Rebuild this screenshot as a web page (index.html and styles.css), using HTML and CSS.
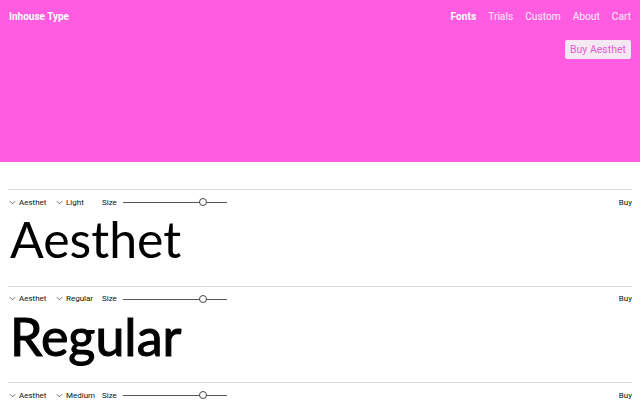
FILE: index.html
```html
<!DOCTYPE html>
<html>
<head>
<meta charset="utf-8">
<link rel="stylesheet" href="styles.css">
</head>
<body>
<header class="hero">
  <nav class="topbar">
    <a class="brand">Inhouse Type</a>
    <div class="menu">
      <a class="menu-item active">Fonts</a>
      <a class="menu-item">Trials</a>
      <a class="menu-item">Custom</a>
      <a class="menu-item">About</a>
      <a class="menu-item">Cart</a>
    </div>
  </nav>
  <div class="cta-row"><button class="cta">Buy Aesthet</button></div>
</header>
<main class="list">
  <section class="row">
    <div class="controls">
      <span class="select"><svg class="chev" viewBox="0 0 8 5"><path d="M1 1l3 3 3-3"/></svg>Aesthet</span>
      <span class="select"><svg class="chev" viewBox="0 0 8 5"><path d="M1 1l3 3 3-3"/></svg>Light</span>
      <span class="size">Size</span>
      <span class="slider"><span class="track"></span><span class="thumb"></span></span>
      <span class="buy">Buy</span>
    </div>
    <div class="specimen light">Aesthet</div>
  </section>
  <section class="row">
    <div class="controls">
      <span class="select"><svg class="chev" viewBox="0 0 8 5"><path d="M1 1l3 3 3-3"/></svg>Aesthet</span>
      <span class="select"><svg class="chev" viewBox="0 0 8 5"><path d="M1 1l3 3 3-3"/></svg>Regular</span>
      <span class="size">Size</span>
      <span class="slider"><span class="track"></span><span class="thumb"></span></span>
      <span class="buy">Buy</span>
    </div>
    <div class="specimen regular">Regular</div>
  </section>
  <section class="row">
    <div class="controls">
      <span class="select"><svg class="chev" viewBox="0 0 8 5"><path d="M1 1l3 3 3-3"/></svg>Aesthet</span>
      <span class="select"><svg class="chev" viewBox="0 0 8 5"><path d="M1 1l3 3 3-3"/></svg>Medium</span>
      <span class="size">Size</span>
      <span class="slider"><span class="track"></span><span class="thumb"></span></span>
      <span class="buy">Buy</span>
    </div>
    <div class="specimen medium">Medium</div>
  </section>
</main>
</body>
</html>
```
FILE: styles.css
```css
* { box-sizing: border-box; }
html, body { margin: 0; padding: 0; }
body {
  font-family: "Roboto", "Liberation Sans", sans-serif;
  background: #fff;
  color: #111;
  overflow: hidden;
  height: 400px;
}
.hero {
  background: #ff5ce1;
  height: 162px;
  padding: 9px 9px 0 9px;
}
.topbar {
  display: flex;
  justify-content: space-between;
  align-items: center;
  height: 14px;
}
.brand {
  color: #fff;
  font-weight: 700;
  font-size: 10px;
}
.menu { display: flex; gap: 12px; }
.menu-item {
  color: #fff;
  font-size: 10.2px;
  opacity: 0.92;
}
.menu-item.active { font-weight: 700; opacity: 1; }
.cta-row {
  display: flex;
  justify-content: flex-end;
  margin-top: 17px;
}
.cta {
  background: #f4e9f2;
  color: #e65dd2;
  border: none;
  border-radius: 2px;
  font-family: inherit;
  font-size: 10.5px;
  height: 19px;
  padding: 0 5px;
}
.list { padding: 27px 8px 0 8px; }
.row {
  border-top: 1px solid #dcdcdc;
  height: 96.5px;
  padding-top: 6px;
}
.controls {
  display: flex;
  align-items: center;
  height: 12px;
  font-size: 8px;
  color: #111;
}
.select {
  display: inline-flex;
  align-items: center;
  width: 47px;
  flex: none;
}
.chev {
  width: 7px;
  height: 5px;
  margin: 0 3px 0 1px;
  fill: none;
  stroke: #444;
  stroke-width: 0.9;
}
.size { width: 21px; flex: none; }
.slider {
  position: relative;
  width: 104px;
  height: 10px;
  flex: none;
}
.track {
  position: absolute;
  left: 0; right: 0; top: 5px;
  height: 1px;
  background: #555;
}
.thumb {
  position: absolute;
  left: 76px; top: 1px;
  width: 8px; height: 8px;
  border: 1px solid #444;
  border-radius: 50%;
  background: #fff;
}
.buy { margin-left: auto; }
.specimen {
  font-family: "Lato", sans-serif;
  font-size: 50px;
  line-height: 63px;
  padding-left: 2px;
  color: #000;
}
.specimen.light { font-weight: 400; }
.specimen.regular { font-weight: 400; font-size: 52px; -webkit-text-stroke: 1.1px #000; }
.specimen.medium { font-weight: 700; }
```
